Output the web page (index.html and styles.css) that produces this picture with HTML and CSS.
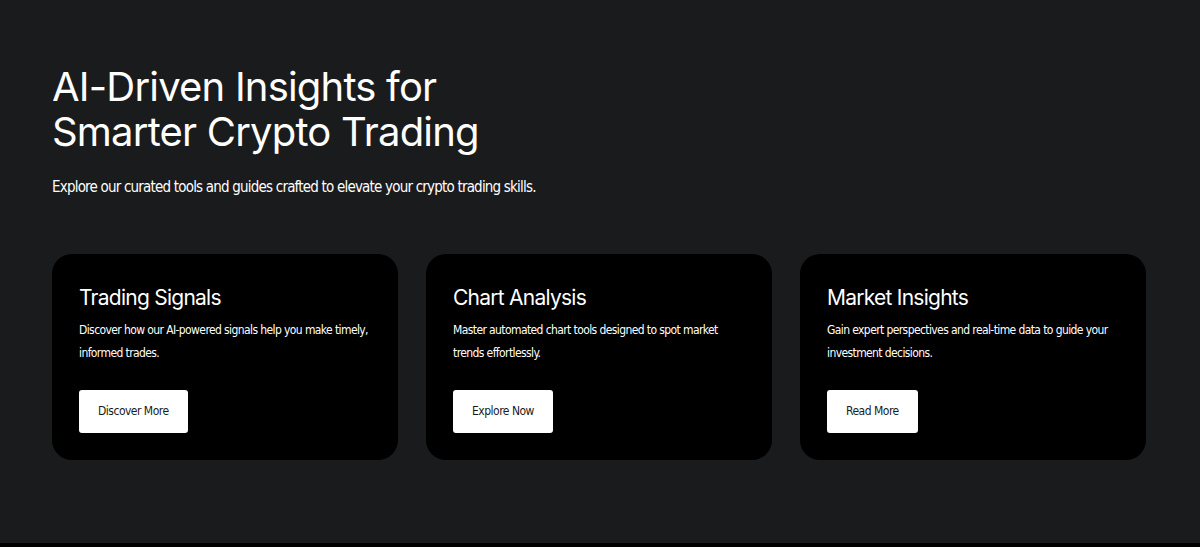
FILE: index.html
```html
<!DOCTYPE html>
<html lang="en">
<head>
  <meta charset="UTF-8">
  <meta name="viewport" content="width=device-width, initial-scale=1.0">
  <title>AI-Driven Insights</title>
  <link rel="stylesheet" href="styles.css">
</head>
<body>
  <section class="insights">
    <h1 class="insights-title">AI-Driven Insights for<br>Smarter Crypto Trading</h1>
    <p class="insights-lead">Explore our curated tools and guides crafted to elevate your crypto trading skills.</p>

    <div class="cards">
      <div class="card">
        <h3 class="card-title">Trading Signals</h3>
        <p class="card-text">Discover how our AI-powered signals help you make timely, informed trades.</p>
        <a href="#" class="card-btn">Discover More</a>
      </div>
      <div class="card">
        <h3 class="card-title">Chart Analysis</h3>
        <p class="card-text">Master automated chart tools designed to spot market trends effortlessly.</p>
        <a href="#" class="card-btn">Explore Now</a>
      </div>
      <div class="card">
        <h3 class="card-title">Market Insights</h3>
        <p class="card-text">Gain expert perspectives and real-time data to guide your investment decisions.</p>
        <a href="#" class="card-btn">Read More</a>
      </div>
    </div>
  </section>
  <div class="bottom-bar"></div>
</body>
</html>
```

FILE: styles.css
```css
body {
  margin: 0;
  padding: 0;
  background-color: #1a1b1d;
  color: #ffffff;
  font-family: "DejaVu Sans", sans-serif;
  font-stretch: condensed;
}

.insights {
  height: 543px;
  box-sizing: border-box;
  padding: 64px 54px 0 52px;
}

.insights-title {
  margin: 0;
  font-family: Inter, "Noto Sans", sans-serif;
  font-stretch: normal;
  font-size: 40px;
  font-weight: 400;
  line-height: 45px;
  letter-spacing: -0.8px;
}

.insights-lead {
  margin: 22px 0 0;
  font-size: 15px;
  line-height: 22px;
  letter-spacing: -0.8px;
}

.cards {
  display: grid;
  grid-template-columns: repeat(3, 346px);
  gap: 28px;
  margin-top: 56px;
}

.card {
  height: 206px;
  box-sizing: border-box;
  padding: 30px 26px 0 27px;
  background-color: #000000;
  border-radius: 20px;
}

.card-title {
  margin: 0;
  font-family: Inter, "Noto Sans", sans-serif;
  font-stretch: normal;
  font-size: 21px;
  font-weight: 400;
  line-height: 28px;
  letter-spacing: -0.75px;
}

.card-text {
  margin: 7px 0 0;
  font-size: 12px;
  line-height: 23px;
  letter-spacing: -0.6px;
}

.card-btn {
  display: inline-block;
  margin-top: 25px;
  padding: 0 19px;
  height: 43px;
  line-height: 43px;
  background-color: #ffffff;
  color: #1a1a1a;
  font-size: 12px;
  letter-spacing: -0.5px;
  text-decoration: none;
  border-radius: 3px;
}

.bottom-bar {
  height: 4px;
  background-color: #000000;
}
```
